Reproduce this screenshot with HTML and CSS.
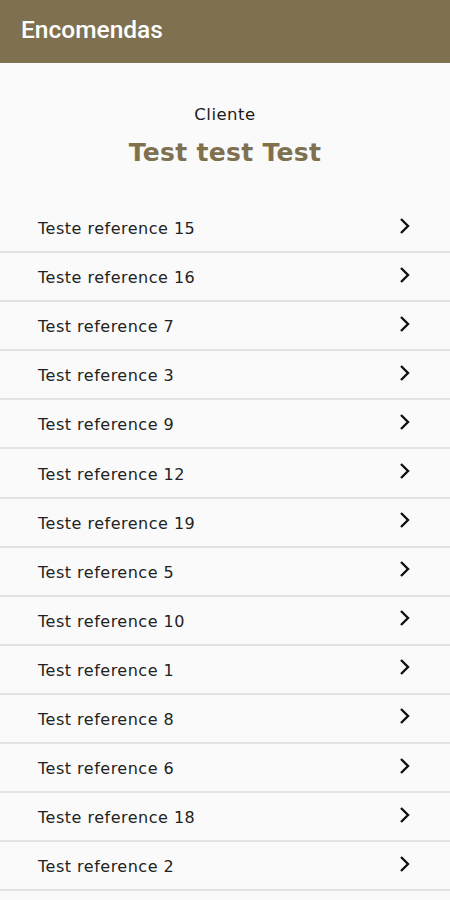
FILE: index.html
```html
<!DOCTYPE html>
<html lang="pt">
<head>
    <meta charset="UTF-8">
    <title>Encomendas</title>
    <link rel="stylesheet" href="styles.css">
</head>
<body>
<div class="bar">
    <h1>Encomendas</h1>
</div>
<div class="client">
    <p class="label">Cliente</p>
    <p class="name">Test test Test</p>
</div>
<ul class="list">
    <li><span>Teste reference 15</span><svg viewBox="0 0 24 24"><path d="M9 5l7 7-7 7"/></svg></li>
    <li><span>Teste reference 16</span><svg viewBox="0 0 24 24"><path d="M9 5l7 7-7 7"/></svg></li>
    <li><span>Test reference 7</span><svg viewBox="0 0 24 24"><path d="M9 5l7 7-7 7"/></svg></li>
    <li><span>Test reference 3</span><svg viewBox="0 0 24 24"><path d="M9 5l7 7-7 7"/></svg></li>
    <li><span>Test reference 9</span><svg viewBox="0 0 24 24"><path d="M9 5l7 7-7 7"/></svg></li>
    <li><span>Test reference 12</span><svg viewBox="0 0 24 24"><path d="M9 5l7 7-7 7"/></svg></li>
    <li><span>Teste reference 19</span><svg viewBox="0 0 24 24"><path d="M9 5l7 7-7 7"/></svg></li>
    <li><span>Test reference 5</span><svg viewBox="0 0 24 24"><path d="M9 5l7 7-7 7"/></svg></li>
    <li><span>Test reference 10</span><svg viewBox="0 0 24 24"><path d="M9 5l7 7-7 7"/></svg></li>
    <li><span>Test reference 1</span><svg viewBox="0 0 24 24"><path d="M9 5l7 7-7 7"/></svg></li>
    <li><span>Test reference 8</span><svg viewBox="0 0 24 24"><path d="M9 5l7 7-7 7"/></svg></li>
    <li><span>Test reference 6</span><svg viewBox="0 0 24 24"><path d="M9 5l7 7-7 7"/></svg></li>
    <li><span>Teste reference 18</span><svg viewBox="0 0 24 24"><path d="M9 5l7 7-7 7"/></svg></li>
    <li><span>Test reference 2</span><svg viewBox="0 0 24 24"><path d="M9 5l7 7-7 7"/></svg></li>
</ul>
</body>
</html>
```

FILE: styles.css
```css
*{
    margin: 0;
    padding: 0;
    box-sizing: border-box;
}
body{
    background: #fafafa;
    font-family: "DejaVu Sans", "Noto Sans", sans-serif;
    overflow: hidden;
}
.bar{
    height: 63px;
    background: #7f7150;
    padding: 0 21px;
    display: flex;
    align-items: center;
}
.bar h1{
    font-family: Roboto, sans-serif;
    font-weight: 500;
    font-size: 24.5px;
    color: #fff;
    margin-top: -4px;
}
.client{
    display: flex;
    flex-direction: column;
    align-items: center;
    padding-top: 42px;
    height: 141px;
}
.label{
    font-size: 16.5px;
    letter-spacing: 0.5px;
    color: #1a1a1a;
}
.name{
    margin-top: 14px;
    font-size: 25px;
    letter-spacing: 0.3px;
    font-weight: bold;
    color: #7f7150;
}
.list li{
    list-style: none;
    height: 49.1px;
    display: flex;
    align-items: center;
    justify-content: space-between;
    padding: 0 34px 0 38px;
    border-bottom: 2px solid #e3e3e3;
}
.list span{
    font-size: 16px;
    letter-spacing: 0.5px;
    color: #222;
    margin-top: 2px;
}
.list svg{
    width: 24px;
    height: 24px;
    fill: none;
    stroke: #111;
    stroke-width: 2.4;
    margin-top: -4px;
}
```
